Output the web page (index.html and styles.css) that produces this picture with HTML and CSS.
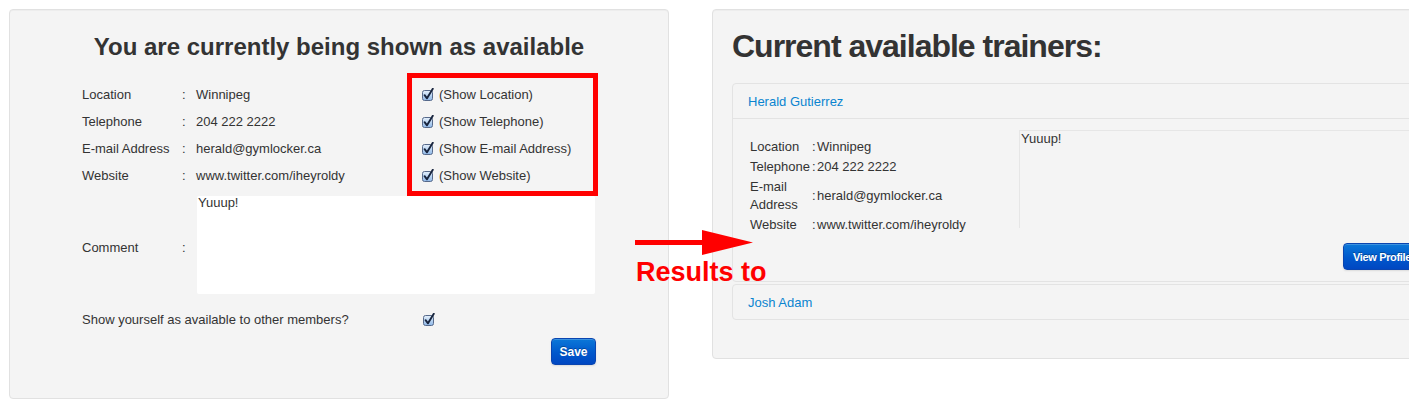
FILE: index.html
```html
<!DOCTYPE html>
<html lang="en">
<head>
<meta charset="utf-8">
<title>Availability</title>
<link rel="stylesheet" href="styles.css">
</head>
<body>
<svg width="0" height="0" class="defs" aria-hidden="true">
  <defs>
    <linearGradient id="cbfill" x1="0" y1="0" x2="0" y2="1">
      <stop offset="0" stop-color="#e6f0fb"/>
      <stop offset="0.5" stop-color="#b9d4f2"/>
      <stop offset="1" stop-color="#8db6e6"/>
    </linearGradient>
    <symbol id="cb" viewBox="0 0 12 13">
      <rect x="0.5" y="2.5" width="10" height="10" rx="2" fill="url(#cbfill)" stroke="#56698a"/>
      <path d="M2.6 7.2 L5 10.3 L10.8 0.8" fill="none" stroke="#17243d" stroke-width="1.9" stroke-linecap="round" stroke-linejoin="round"/>
    </symbol>
  </defs>
</svg>

<main class="page">
  <section class="well well-left">
    <h3 class="title-left">You are currently being shown as available</h3>
    <div class="form">
      <div class="top">
        <div class="fields">
          <div class="field"><span class="lbl">Location</span><span class="colon">:</span><span class="val">Winnipeg</span></div>
          <div class="field"><span class="lbl">Telephone</span><span class="colon">:</span><span class="val">204 222 2222</span></div>
          <div class="field"><span class="lbl">E-mail Address</span><span class="colon">:</span><span class="val">herald@gymlocker.ca</span></div>
          <div class="field"><span class="lbl">Website</span><span class="colon">:</span><span class="val">www.twitter.com/iheyroldy</span></div>
        </div>
        <div class="showbox">
          <div class="chk"><svg class="cb"><use href="#cb"/></svg><span>(Show Location)</span></div>
          <div class="chk"><svg class="cb"><use href="#cb"/></svg><span>(Show Telephone)</span></div>
          <div class="chk"><svg class="cb"><use href="#cb"/></svg><span>(Show E-mail Address)</span></div>
          <div class="chk"><svg class="cb"><use href="#cb"/></svg><span>(Show Website)</span></div>
        </div>
      </div>
      <div class="field comment-row">
        <span class="lbl">Comment</span><span class="colon">:</span>
        <div class="textarea">Yuuup!</div>
      </div>
      <div class="avail">
        <span class="avail-lbl">Show yourself as available to other members?</span>
        <svg class="cb"><use href="#cb"/></svg>
      </div>
      <div class="actions">
        <button class="btn btn-save">Save</button>
      </div>
    </div>
  </section>

  <section class="well well-right">
    <h2 class="title-right">Current available trainers:</h2>
    <div class="accordion">
      <div class="group">
        <div class="group-head open"><a class="link" href="#">Herald Gutierrez</a></div>
        <div class="group-body">
          <div class="info">
            <div class="details">
              <span class="dl">Location</span><span class="dc">:</span><span class="dv">Winnipeg</span>
              <span class="dl">Telephone</span><span class="dc">:</span><span class="dv">204 222 2222</span>
              <span class="dl">E-mail Address</span><span class="dc">:</span><span class="dv">herald@gymlocker.ca</span>
              <span class="dl">Website</span><span class="dc">:</span><span class="dv">www.twitter.com/iheyroldy</span>
            </div>
            <div class="comment-box">Yuuup!</div>
          </div>
          <div class="actions-right">
            <button class="btn btn-view">View Profile</button>
          </div>
        </div>
      </div>
      <div class="group">
        <div class="group-head"><a class="link" href="#">Josh Adam</a></div>
      </div>
    </div>
  </section>
</main>

<svg class="arrow" width="122" height="27" viewBox="0 0 122 27" aria-hidden="true">
  <rect x="0" y="10" width="72" height="5" fill="#ff0000"/>
  <polygon points="67,0 118,12.5 67,25" fill="#ff0000"/>
</svg>
<div class="note">Results to</div>
</body>
</html>
```

FILE: styles.css
```css
* { box-sizing: border-box; }

html, body {
  margin: 0;
  padding: 0;
  background: #ffffff;
}

body {
  position: relative;
  width: 1409px;
  height: 405px;
  overflow: hidden;
  font-family: "Liberation Sans", Arial, Helvetica, sans-serif;
  font-size: 13px;
  color: #333333;
}

.defs { position: absolute; }

.page {
  display: flex;
  align-items: flex-start;
  gap: 43px;
  padding: 9px 0 0 9px;
}

.well {
  flex: none;
  background: #f4f4f4;
  border: 1px solid #e1e1e1;
  border-radius: 4px;
  box-shadow: inset 0 1px 1px rgba(0,0,0,0.03);
}

/* ---------- left panel ---------- */
.well-left {
  width: 660px;
  height: 390px;
  padding: 22px 0 0 72px;
}

.title-left {
  margin: 0 0 0 -72px;
  width: 658px;
  text-align: center;
  font-size: 24px;
  line-height: 30px;
  font-weight: bold;
  color: #333333;
}

.form {
  width: 516px;
  margin-top: 11px;
}

.top {
  display: flex;
  align-items: flex-start;
}

.fields {
  width: 325px;
  padding-top: 8px;
}

.field {
  display: grid;
  grid-template-columns: 100px 14px 1fr;
  height: 27px;
  line-height: 27px;
  white-space: nowrap;
}

.showbox {
  width: 191px;
  border: 5px solid #ff0000;
  padding: 3px 0 2px 10px;
}

.chk {
  display: flex;
  align-items: center;
  gap: 5px;
  height: 27px;
}

.cb {
  width: 12px;
  height: 13px;
  flex: none;
}

.comment-row {
  height: 98px;
  align-items: center;
  line-height: 20px;
}

.comment-row .lbl,
.comment-row .colon {
  margin-top: 5px;
}

.textarea {
  align-self: stretch;
  margin-left: 1px;
  width: 398px;
  background: #ffffff;
  border-radius: 2px;
  padding: 0 1px;
  line-height: 13px;
  font-size: 13px;
}

.avail {
  display: flex;
  align-items: center;
  height: 27px;
  margin-top: 12px;
}

.avail-lbl {
  width: 341px;
}

.actions {
  display: flex;
  justify-content: flex-end;
  padding-right: 2px;
  margin-top: 5px;
}

.btn {
  height: 27px;
  border: 1px solid #0a45b0;
  border-radius: 4px;
  background: linear-gradient(to bottom, #0b78d8 0%, #0058cc 55%, #0047c2 100%);
  color: #ffffff;
  font-family: "Liberation Sans", Arial, Helvetica, sans-serif;
  font-weight: bold;
  font-size: 12px;
  text-shadow: 0 -1px 0 rgba(0,0,0,0.3);
  box-shadow: inset 0 1px 0 rgba(255,255,255,0.2), 0 1px 2px rgba(0,0,0,0.1);
  cursor: pointer;
}

.btn-save {
  width: 45px;
  padding: 0;
}

/* ---------- right panel ---------- */
.well-right {
  width: 750px;
  height: 350px;
  padding: 16px 20px 0 19px;
}

.title-right {
  margin: 0 0 17px 0;
  font-size: 32px;
  line-height: 40px;
  letter-spacing: -1px;
  font-weight: bold;
  color: #333333;
}

.group {
  border: 1px solid #e3e3e3;
  border-radius: 4px;
  margin-bottom: 2px;
}

.group-head {
  padding: 9px 15px 7px;
  line-height: 18px;
}

.group-head.open {
  border-bottom: 1px solid #e3e3e3;
}

.link {
  color: #0a84d0;
  text-decoration: none;
  font-size: 13px;
}

.group-body {
  padding: 11px 15px 11px 17px;
}

.info {
  display: flex;
  align-items: flex-start;
  height: 98px;
}

.details {
  width: 269px;
  flex: none;
  display: grid;
  grid-template-columns: 62px 5px 1fr;
  margin-top: 7px;
  line-height: 18px;
}

.details span {
  padding: 1px 0;
  display: flex;
  align-items: center;
}

.dv { white-space: nowrap; }

.comment-box {
  flex: 1;
  height: 98px;
  border: 1px solid #e6e6e6;
  border-right: none;
  border-bottom: none;
  background: #f4f4f4;
  padding: 0 1px;
  line-height: 16px;
}

.actions-right {
  display: flex;
  justify-content: flex-end;
  margin-top: 15px;
}

.btn-view {
  width: 82px;
  padding: 0 0 0 9px;
  text-align: left;
  font-size: 11px;
  letter-spacing: -0.35px;
  white-space: nowrap;
}

/* ---------- annotation overlay ---------- */
.arrow {
  position: absolute;
  left: 635px;
  top: 230px;
}

.note {
  position: absolute;
  left: 636px;
  top: 259px;
  font-family: "Liberation Sans", Arial, Helvetica, sans-serif;
  font-weight: bold;
  font-size: 27px;
  line-height: 27px;
  color: #ff0000;
  white-space: nowrap;
}
```
